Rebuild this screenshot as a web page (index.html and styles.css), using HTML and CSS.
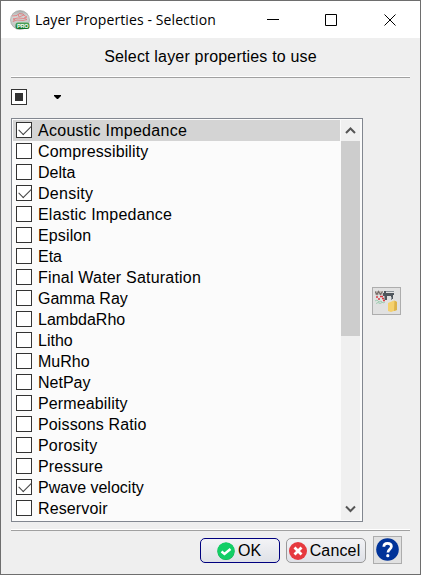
FILE: index.html
```html
<!DOCTYPE html>
<html lang="en">
<head>
<meta charset="utf-8">
<title>Layer Properties - Selection</title>
<link rel="stylesheet" href="styles.css">
</head>
<body>
<div class="window">
  <header class="titlebar">
    <svg class="app-icon" width="20" height="20" viewBox="0 0 20 20">
      <defs><linearGradient id="disc" x1="0" y1="0" x2="0" y2="1"><stop offset="0" stop-color="#a9abaa"/><stop offset=".3" stop-color="#d2d4d3"/><stop offset="1" stop-color="#bfc3c1"/></linearGradient>
      <linearGradient id="badge" x1="0" y1="0" x2="0" y2="1"><stop offset="0" stop-color="#54a860"/><stop offset="1" stop-color="#087021"/></linearGradient></defs>
      <circle cx="10" cy="10" r="9.500" fill="url(#disc)" stroke="#a0a2a1" stroke-width=".7"/>
      <path d="M2 6l5-.5 2-2 4 .5 2 2 2 1-3 1 3 1.500-4 1-6-.5-4 1.500 2-2-2-.5 5-1 6 .5M8 4l1 3 5-2" fill="none" stroke="#e66b6e" stroke-width=".7"/>
      <rect x="5.500" y="12.500" width="14" height="6.500" rx="2.500" fill="url(#badge)"/>
      <text class="badge-text" x="7" y="17.800" textLength="11.500">PRO</text>
    </svg>
    <h1 class="title">Layer Properties - Selection</h1>
    <svg class="controls" width="130" height="12" viewBox="0 0 130 12" fill="none" stroke="#000">
      <path d="M0 5.500h12M58.500.5h11v11h-11zM117.500.5l11 11M128.500.5l-11 11"/>
    </svg>
  </header>
  <main class="content">
    <p class="heading">Select layer properties to use</p>
    <div class="rule"></div>
    <div class="toolbar">
      <span class="box box-partial"></span>
      <svg class="arrow" width="7" height="4" viewBox="0 0 7 4"><path d="M0 0h7v1L4 4H3L0 1z"/></svg>
    </div>
    <div class="body">
      <div class="listbox">
        <ul class="items">
          <li class="item selected"><span class="box checked"></span><span class="label spaced-3">Acoustic Impedance</span></li>
          <li class="item"><span class="box"></span><span class="label spaced-1">Compressibility</span></li>
          <li class="item"><span class="box"></span><span class="label">Delta</span></li>
          <li class="item"><span class="box checked"></span><span class="label spaced-3">Density</span></li>
          <li class="item"><span class="box"></span><span class="label spaced-2">Elastic Impedance</span></li>
          <li class="item"><span class="box"></span><span class="label spaced-1">Epsilon</span></li>
          <li class="item"><span class="box"></span><span class="label">Eta</span></li>
          <li class="item"><span class="box"></span><span class="label spaced-2">Final Water Saturation</span></li>
          <li class="item"><span class="box"></span><span class="label">Gamma Ray</span></li>
          <li class="item"><span class="box"></span><span class="label">LambdaRho</span></li>
          <li class="item"><span class="box"></span><span class="label">Litho</span></li>
          <li class="item"><span class="box"></span><span class="label">MuRho</span></li>
          <li class="item"><span class="box"></span><span class="label">NetPay</span></li>
          <li class="item"><span class="box"></span><span class="label spaced-1">Permeability</span></li>
          <li class="item"><span class="box"></span><span class="label spaced-1">Poissons Ratio</span></li>
          <li class="item"><span class="box"></span><span class="label spaced-2">Porosity</span></li>
          <li class="item"><span class="box"></span><span class="label spaced-1">Pressure</span></li>
          <li class="item"><span class="box checked"></span><span class="label">Pwave velocity</span></li>
          <li class="item"><span class="box"></span><span class="label spaced-1">Reservoir</span></li>
        </ul>
        <div class="scrollbar">
          <svg class="up" width="19" height="21" viewBox="0 0 19 21"><path d="M5 13l4.500-4.500L14 13"/></svg>
          <div class="thumb"></div>
          <svg class="down" width="19" height="21" viewBox="0 0 19 21"><path d="M5 7.500L9.500 12 14 7.500"/></svg>
        </div>
      </div>
      <button class="tool" aria-label="Manage">
        <svg width="23" height="23" viewBox="0 0 23 23">
          <path d="M0 1h8v4H0z" fill="#c5beb9"/>
          <path d="M0 1.500l2 3 1.500-3 2 3 2-3" fill="none" stroke="#756d69" stroke-width="1.200"/>
          <path d="M9 1h2v2h8v2h-1v4h-2V6h-4v4H9.500V6H8V3h1z" fill="#50565c"/>
          <path d="M11 1.500h8M16.500 7v3" stroke="#8c9298"/>
          <path d="M1 7h2M5 6.500h3M3 9h2M7 8.500h2M8 10.500h2" stroke="#d83a43" stroke-width="1.500"/>
          <path d="M0 11l2-1 2 2 2-1 2 2 2-1M1 13.500l2-1 2 1 2-1" fill="none" stroke="#a0cdb2"/>
          <path d="M13 13l6-2.500 3 1.500v8l-6 2-3-1z" fill="#f5d16e"/>
          <path d="M19.500 10.500L22 12v8l-3 1z" fill="#ddb349"/>
        </svg>
      </button>
    </div>
    <div class="rule rule-bottom"></div>
    <footer class="actions">
      <button class="btn ok">
        <svg width="18" height="18" viewBox="0 0 18 18"><circle cx="9" cy="9.400" r="8.600" fill="#12a94c"/><circle cx="9" cy="8.800" r="8.600" fill="#13ce66"/><path d="M4.500 9.500l3 2.500 6-5" fill="none" stroke="#fff" stroke-width="2.400"/></svg>
        <span class="btn-label">OK</span>
      </button>
      <button class="btn cancel">
        <svg width="18" height="18" viewBox="0 0 18 18"><circle cx="9" cy="9" r="9" fill="#e6393f"/><path d="M5.500 5.500l7 7M12.500 5.500l-7 7" stroke="#fff" stroke-width="2.800"/></svg>
        <span class="btn-label">Cancel</span>
      </button>
      <button class="help" aria-label="Help">
        <svg width="23" height="23" viewBox="0 0 23 23"><circle cx="11.500" cy="11.500" r="11.300" fill="#003399"/><path d="M7.800 8.800C7.800 6.500 9.300 5.300 11.500 5.300s3.900 1.300 3.900 3.300c0 2.500-3.500 2.800-3.500 5.800" fill="none" stroke="#fff" stroke-width="2.700"/><circle cx="11.800" cy="17.700" r="1.600" fill="#fff"/></svg>
      </button>
    </footer>
  </main>
</div>
</body>
</html>
```
FILE: styles.css
```css
* { box-sizing: border-box; }
body { margin: 0; font: 16px/21px "Liberation Sans", Arial, sans-serif; color: #000; }
svg { display: block; flex: none; }
button { margin: 0; padding: 0; font: inherit; color: inherit; }
.window { width: 421px; height: 575px; border: 1px solid #6e6e6e; background: #efefef; overflow: hidden; }
.titlebar { display: flex; align-items: center; height: 37px; padding: 0 23px 0 9px; background: #fff; }
.title { margin: 0 0 0 5px; font: 14px/20px "Open Sans", "Segoe UI", sans-serif; letter-spacing: .1px; white-space: nowrap; }
.controls { margin-left: auto; }
.badge-text { font: bold 5.500px "Liberation Sans", sans-serif; fill: #fff; }
.content { padding: 0 10px; }
.heading { margin: 0; height: 38px; line-height: 37px; letter-spacing: .18px; text-align: center; }
.rule { width: 399px; height: 2px; border-top: 1px solid #fff; border-bottom: 1px solid #a0a0a0; }
.toolbar { display: flex; align-items: center; height: 40px; padding-bottom: 2px; }
.arrow { margin-left: 27px; }
.box { position: relative; flex: none; width: 16px; height: 16px; border: 1px solid #333; background: #fff; }
.box-partial { background: linear-gradient(#333, #333) center / 8px 8px no-repeat #fff; }
.checked::after { content: ""; position: absolute; left: 2px; top: 2px; width: 11px; height: 6px; border: solid #444; border-width: 0 0 1.500px 1.500px; transform: rotate(-45deg); }
.body { display: flex; }
.listbox { display: flex; width: 352px; height: 404px; padding: 1px; border: 1px solid #828790; background: #fbfbfb; }
.items { width: 327px; margin: 0 1px 0 0; padding: 0; list-style: none; }
.item { display: flex; align-items: flex-start; height: 21px; padding-left: 3px; }
.item .box { margin-top: 2px; }
.selected { background: #d4d4d4; }
.label { margin-left: 6px; white-space: nowrap; }
.spaced-1 { letter-spacing: .13px; }
.spaced-2 { letter-spacing: .2px; }
.spaced-3 { letter-spacing: .28px; }
.scrollbar { display: flex; flex-direction: column; width: 19px; background: #f0f0f0; }
.scrollbar path { fill: none; stroke: #555; stroke-width: 2; }
.thumb { height: 195px; background: #cdcdcd; }
.down { margin-top: auto; }
.tool { display: grid; place-items: center; width: 29px; height: 28px; margin: 169px 0 0 9px; border: 1px solid #adadad; background: #e1e1e1; }
.rule-bottom { margin-top: 7px; }
.actions { display: flex; align-items: center; height: 39px; padding-left: 189px; }
.btn { display: flex; align-items: center; justify-content: center; width: 80px; height: 25px; padding-right: 2px; border: 1px solid #999; border-radius: 5px; background: linear-gradient(#f3f3f6, #dfe1e7); }
.ok { border-color: #00007f; }
.cancel { margin-left: 6px; padding-right: 3px; letter-spacing: .15px; }
.btn-label { margin-left: 3px; }
.help { display: grid; place-items: center; width: 29px; height: 28px; margin: -2px 0 0 7px; border: 1px solid #adadad; background: #e1e1e1; }
```
